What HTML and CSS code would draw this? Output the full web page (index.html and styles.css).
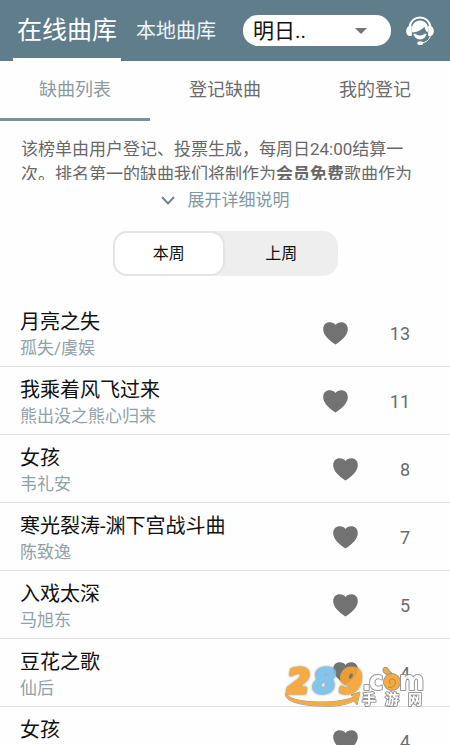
FILE: index.html
```html
<!DOCTYPE html>
<html lang="zh-CN">
<head>
<meta charset="utf-8">
<meta name="viewport" content="width=device-width, initial-scale=1">
<title>在线曲库</title>
<link rel="stylesheet" href="styles.css">
</head>
<body>
<svg class="defs" aria-hidden="true">
  <symbol id="heart" viewBox="0 0 25 23">
    <path d="M12.5 22.6C9.6 20.3 6.1 18 3.700 15.200C1.500 12.600.2 9.900.2 7C.2 3 3 .3 6.800.3C9.200.3 11.200 1.300 12.500 3.100C13.800 1.300 15.800.3 18.200.3C22 .3 24.800 3 24.800 7C24.800 9.900 23.500 12.600 21.300 15.200C18.900 18 15.400 20.300 12.500 22.600Z"/>
  </symbol>
</svg>
<div class="app">
  <header class="topbar">
    <nav class="library">
      <a class="library-link current" href="#online">在线曲库</a>
      <a class="library-link" href="#local">本地曲库</a>
    </nav>
    <div class="picker">
      <select class="picker-select" aria-label="歌手"><option>明日..</option></select>
      <svg class="picker-caret" viewBox="0 0 12 6" aria-hidden="true"><path d="M0 0H12L6 6Z"/></svg>
    </div>
    <button class="support" type="button" aria-label="客服">
      <svg viewBox="0 0 28 30" aria-hidden="true">
        <path class="line" d="M3.500 11C4.500 5 8.700 1.500 14 1.500S23.500 5 24.500 11"/>
        <path class="solid" d="M3.500 10H5.800V20H3.500C1.300 19.500.2 17.800.2 15.200S1.300 10.500 3.500 10ZM24.500 10H22.200V20H24.500C26.700 19.500 27.800 17.800 27.800 15.200S26.700 10.500 24.500 10Z"/>
        <path class="solid" d="M6.300 16.500C4.500 9.500 8.500 4.600 14 4.600S23.500 9.500 21.700 16.500C20 15.500 18.900 13.500 18.500 10.500C15.500 14.500 11 16 6.300 16.500Z"/>
        <path class="solid" d="M7.300 17.800H20.700C19.700 21.200 17.300 23.500 14 23.500S8.300 21.200 7.300 17.800Z"/>
        <path class="face" d="M9.500 17.300H18.500C17.500 20.200 10.500 20.200 9.500 17.300Z"/>
        <path class="thin" d="M24.500 19.500C23.500 23.500 20.500 26.500 15 27.200"/>
        <ellipse class="solid" cx="14.200" cy="27.200" rx="2.900" ry="1.900"/>
      </svg>
    </button>
  </header>

  <nav class="tabs">
    <a class="tab active" href="#missing">缺曲列表</a>
    <a class="tab" href="#register">登记缺曲</a>
    <a class="tab" href="#mine">我的登记</a>
  </nav>

  <main class="content">
    <p class="notice">该榜单由用户登记、投票生成，每周日24:00结算一次。排名第一的缺曲我们将制作为<b>会员免费</b>歌曲作为</p>
    <button class="expand" type="button">
      <svg viewBox="0 0 14 9" aria-hidden="true"><path d="M1 1L7 7.500L13 1"/></svg>
      <span>展开详细说明</span>
    </button>

    <div class="weeks">
      <button class="week selected" type="button" aria-pressed="true">本周</button>
      <button class="week" type="button" aria-pressed="false">上周</button>
    </div>

    <ol class="songs">
      <li class="song">
        <div class="info"><h2>月亮之失</h2><p>孤失/虞娱</p></div>
        <button class="vote" type="button"><svg class="heart" aria-hidden="true"><use href="#heart"/></svg><span>13</span></button>
      </li>
      <li class="song">
        <div class="info"><h2>我乘着风飞过来</h2><p>熊出没之熊心归来</p></div>
        <button class="vote" type="button"><svg class="heart" aria-hidden="true"><use href="#heart"/></svg><span>11</span></button>
      </li>
      <li class="song">
        <div class="info"><h2>女孩</h2><p>韦礼安</p></div>
        <button class="vote" type="button"><svg class="heart" aria-hidden="true"><use href="#heart"/></svg><span>8</span></button>
      </li>
      <li class="song">
        <div class="info"><h2>寒光裂涛-渊下宫战斗曲</h2><p>陈致逸</p></div>
        <button class="vote" type="button"><svg class="heart" aria-hidden="true"><use href="#heart"/></svg><span>7</span></button>
      </li>
      <li class="song">
        <div class="info"><h2>入戏太深</h2><p>马旭东</p></div>
        <button class="vote" type="button"><svg class="heart" aria-hidden="true"><use href="#heart"/></svg><span>5</span></button>
      </li>
      <li class="song">
        <div class="info"><h2>豆花之歌</h2><p>仙后</p></div>
        <button class="vote" type="button"><svg class="heart" aria-hidden="true"><use href="#heart"/></svg><span>4</span></button>
      </li>
      <li class="song">
        <div class="info"><h2>女孩</h2><p>韦礼安</p></div>
        <button class="vote" type="button"><svg class="heart" aria-hidden="true"><use href="#heart"/></svg><span>4</span></button>
      </li>
    </ol>
  </main>

  <svg class="watermark" viewBox="0 0 144 44" role="img" aria-label="289.com 手游网">
    <path class="swoosh" d="M2 28C4 34 18 37 38 37C52 37 62 35 70 32L67 30L76 27L73 40L70 36C62 40 51 42 38 41C17 41-1 36 2 28Z"/>
    <text class="digit orange" x="3" y="28">2</text>
    <text class="digit blue" x="29" y="28">8</text>
    <text class="digit orange" x="55" y="28">9</text>
    <text class="domain" x="78" y="25">.</text>
    <text class="domain" x="85" y="25">c</text>
    <g class="snail">
      <path d="M103 9C98 7 99 2 102 3C105 4 104 7 107 8Z"/>
      <circle cx="108" cy="17" r="8"/>
      <path class="spiral" d="M104 22C111 24 114 16 109 14C105 13 104 18 107 19"/>
    </g>
    <text class="domain" x="115" y="25">m</text>
    <text class="chinese" x="78" y="39">手</text>
    <text class="chinese" x="101" y="39">游</text>
    <text class="chinese" x="124" y="39">网</text>
  </svg>
</div>
</body>
</html>
```
FILE: styles.css
```css
* {
  box-sizing: border-box;
}

body {
  margin: 0;
  background: #fefefe;
  color: #111;
  font-family: Roboto, "Noto Sans CJK SC", sans-serif;
}

h2,
p,
ol {
  margin: 0;
  padding: 0;
}

a {
  color: inherit;
  text-decoration: none;
}

button {
  padding: 0;
  border: 0;
  background: none;
  color: inherit;
  font: inherit;
}

.defs {
  display: none;
}

.app {
  position: relative;
  display: flex;
  flex-direction: column;
  height: 100vh;
  overflow: hidden;
}

/* Top bar */

.topbar {
  display: flex;
  flex: none;
  align-items: center;
  height: 61px;
  padding: 0 16px 0 13px;
  background: #607d8b;
}

.library {
  display: flex;
  flex: none;
  align-self: stretch;
  gap: 11px;
}

.library-link {
  padding: 0 4px;
  color: #eff5f7;
  font-size: 20px;
  line-height: 62px;
}

.library-link.current {
  border-bottom: 3px solid #fff;
  color: #fff;
  font-size: 25px;
}

.picker {
  position: relative;
  flex: 1;
  margin: 0 15px 0 23px;
}

.picker-select {
  display: block;
  width: 100%;
  height: 31px;
  padding: 0 36px 0 10px;
  border: 0;
  border-radius: 15px;
  background: #fff;
  color: #111;
  font-family: inherit;
  font-size: 21px;
  appearance: none;
}

.picker-caret {
  position: absolute;
  top: 13px;
  right: 24px;
  width: 12px;
  height: 6px;
  fill: #757575;
}

.support {
  flex: none;
  width: 28px;
  height: 30px;
}

.support svg {
  display: block;
  width: 28px;
  height: 30px;
}

.support .solid {
  fill: #fff;
}

.support .face {
  fill: #607d8b;
}

.support .line,
.support .thin {
  fill: none;
  stroke: #fff;
  stroke-width: 2;
}

.support .thin {
  stroke-width: 1;
}

/* Tabs */

.tabs {
  display: grid;
  flex: none;
  grid-template-columns: repeat(3, 1fr);
}

.tab {
  height: 60px;
  border-bottom: 3px solid transparent;
  color: #6c6c6c;
  font-size: 18px;
  line-height: 57px;
  text-align: center;
}

.tab.active {
  border-color: #78919d;
  color: #8b9a9e;
}

/* Notice */

.content {
  flex: 1;
  min-height: 0;
  padding-top: 16px;
}

.notice {
  height: 43px;
  padding: 0 32px 0 21px;
  overflow: hidden;
  color: #686868;
  font-size: 17px;
  line-height: 25px;
}

.expand {
  display: flex;
  align-items: center;
  gap: 13px;
  margin: 7px auto 0;
  color: #829a9f;
  font-size: 17px;
  line-height: 26px;
}

.expand svg {
  width: 14px;
  height: 9px;
  fill: none;
  stroke: #78868b;
  stroke-width: 2;
}

.weeks {
  display: grid;
  grid-template-columns: 1fr 1fr;
  width: 50%;
  height: 45px;
  margin: 18px auto 0;
  border-radius: 15px;
  background: #eee;
}

.week {
  padding-bottom: 3px;
  border: 2px solid transparent;
  border-radius: 14px;
  color: #111;
  font-size: 16px;
}

.week.selected {
  border-color: #e4e4e4;
  background: #fff;
}

/* Song list */

.songs {
  margin-top: 23px;
  list-style: none;
}

.song {
  display: flex;
  align-items: flex-start;
  justify-content: space-between;
  padding: 10px 40px 5px 20px;
  border-bottom: 1px solid #dedede;
}

.info h2 {
  font-size: 20px;
  font-weight: 400;
  line-height: 26px;
}

.info p {
  color: #8fa2a7;
  font-size: 17px;
  line-height: 26px;
}

.vote {
  display: flex;
  align-items: center;
  gap: 42px;
  height: 48px;
  color: #6c6c6c;
  font-size: 18px;
}

.heart {
  width: 25px;
  height: 23px;
  fill: #727272;
}

/* Site mark laid over the list */

.watermark {
  position: absolute;
  right: 22px;
  bottom: 36px;
  width: 144px;
  height: 44px;
  overflow: visible;
  opacity: 0.9;
}

.watermark text,
.watermark path,
.watermark circle {
  paint-order: stroke;
  stroke: #8c8c8c;
  stroke-width: 2px;
  stroke-linejoin: round;
}

.watermark .digit {
  font: italic 700 33px "DejaVu Sans", sans-serif;
  stroke-width: 3px;
  filter: drop-shadow(0 0 1px #777);
}

.watermark .orange {
  fill: #f6a22e;
  stroke: #f6a22e;
}

.watermark .blue {
  fill: #76bfe8;
  stroke: #76bfe8;
}

.watermark .swoosh {
  fill: #f6a22e;
  stroke-width: 1px;
}

.domain {
  fill: #fff;
  font: 700 27px "DejaVu Sans Condensed", "DejaVu Sans", sans-serif;
}

.snail {
  fill: #f6a22e;
}

.watermark .spiral {
  fill: none;
  stroke: #a87930;
  stroke-width: 1px;
}

.chinese {
  fill: #fff;
  font: 700 14px "Noto Sans CJK SC", sans-serif;
}
```
